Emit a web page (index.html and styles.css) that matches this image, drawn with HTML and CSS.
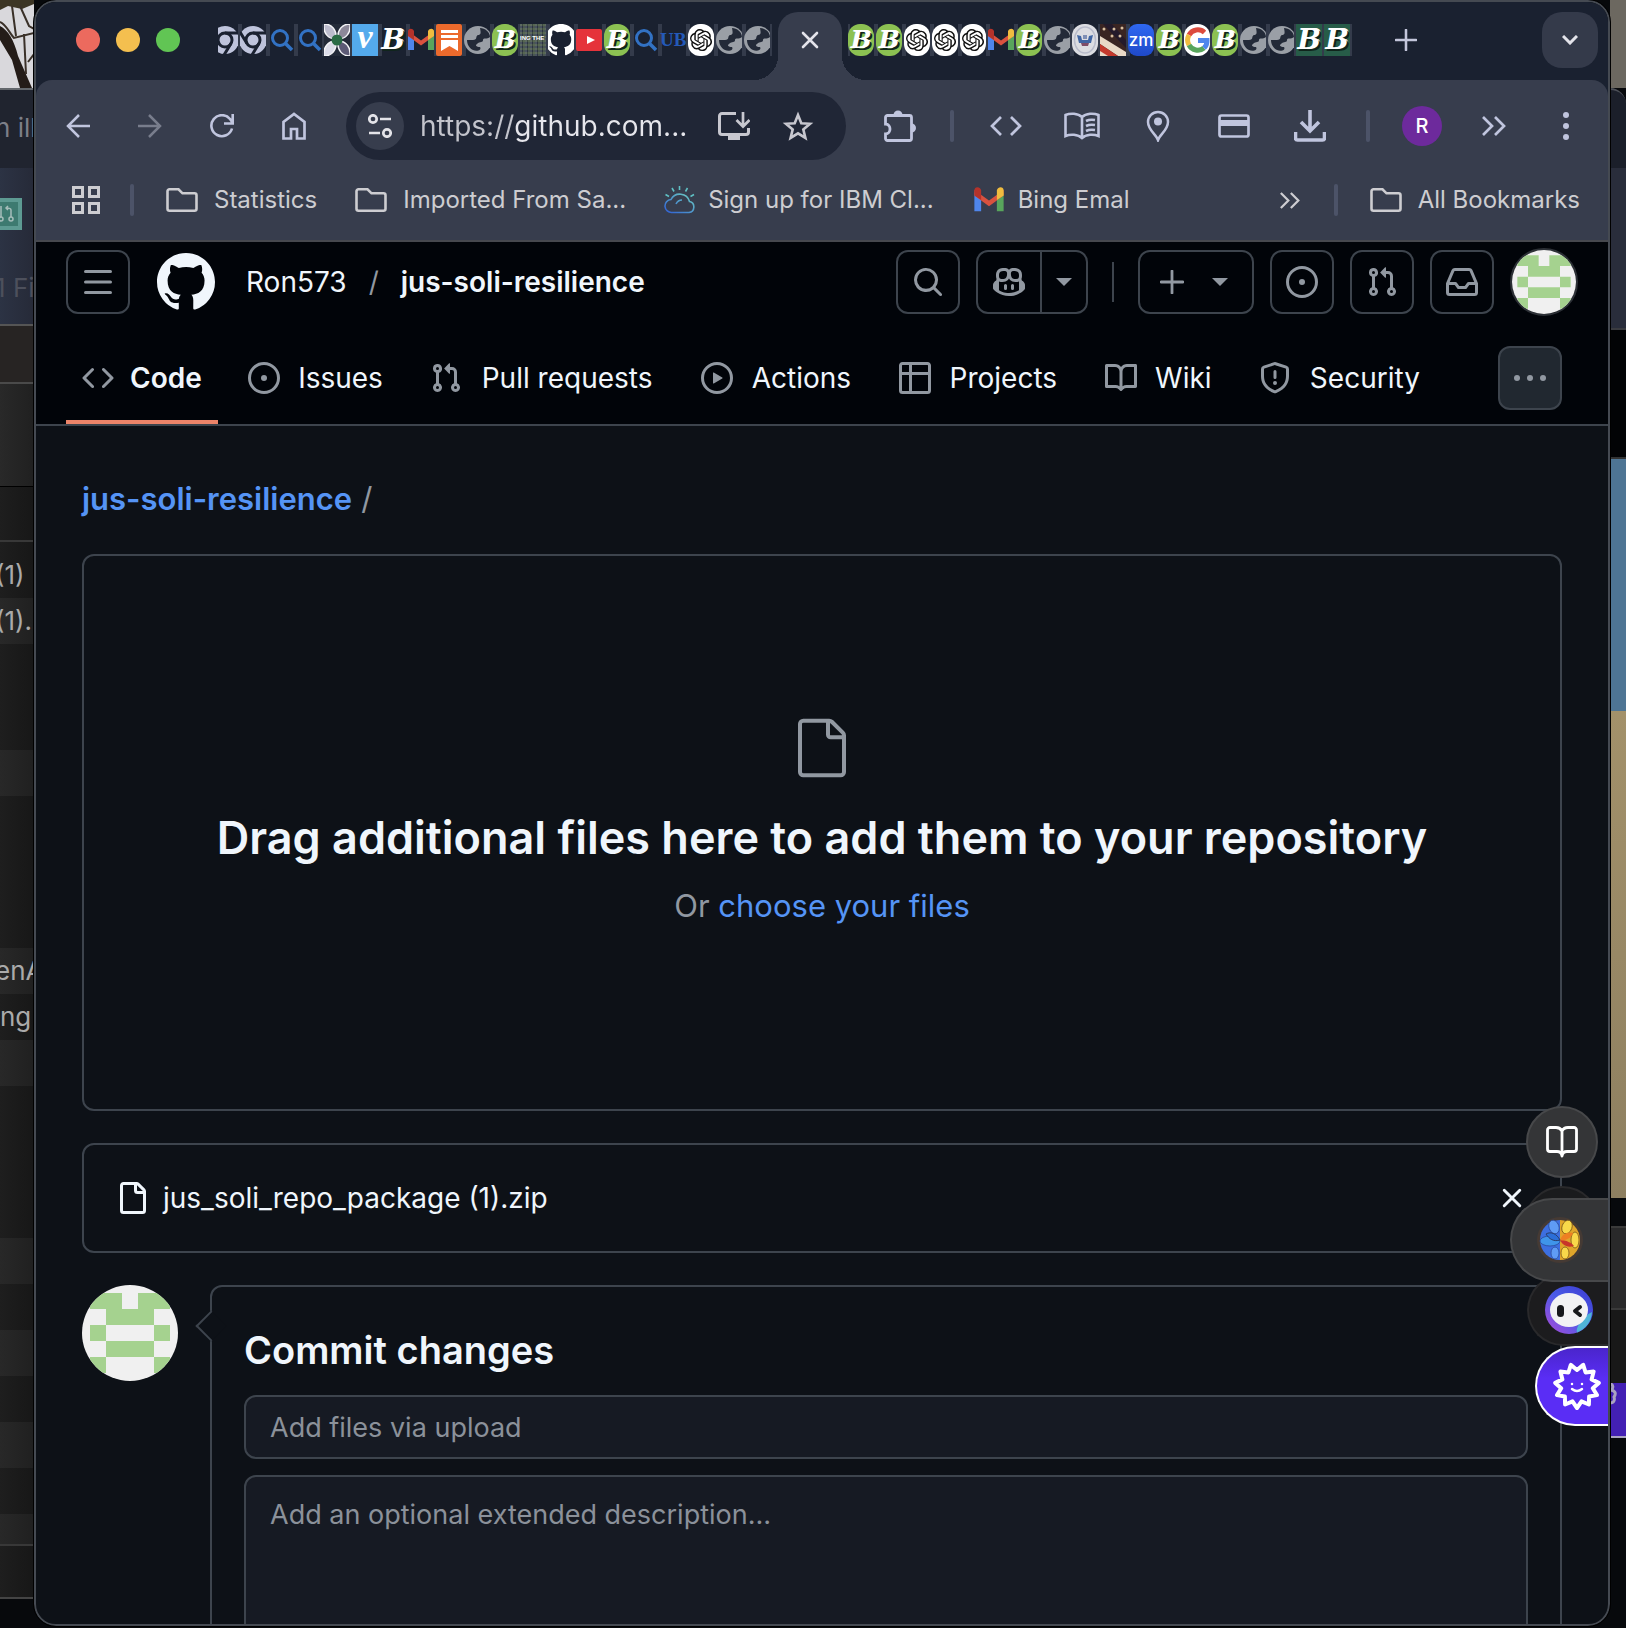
FILE: index.html
```html
<!DOCTYPE html>
<html lang="en">
<head>
<meta charset="utf-8">
<title>Upload files · Ron573/jus-soli-resilience</title>
<link rel="stylesheet" href="styles.css">
</head>
<body>
<svg class="defs" aria-hidden="true">
  <defs>
    <linearGradient id="g-cloud" x1="0" y1="1" x2="1" y2="0"><stop offset="0" stop-color="#2f5fd6"/><stop offset="1" stop-color="#6fd0c0"/></linearGradient>
    <linearGradient id="g-ring" x1="0" y1="1" x2="1" y2="0"><stop offset="0" stop-color="#b14ad8"/><stop offset=".5" stop-color="#4a5be8"/><stop offset="1" stop-color="#3d3bd0"/></linearGradient>
  </defs>
  <symbol id="f-chrome" viewBox="0 0 26 32"><circle cx="13" cy="16" r="14" fill="#bfc4dc"/><circle cx="13" cy="16" r="7" fill="none" stroke="#1a2130" stroke-width="3"/><path d="M13 9h14M7 19.500 0 8M19 19.500 12 31" stroke="#1a2130" stroke-width="3"/></symbol>
  <symbol id="f-search" viewBox="0 0 26 32"><circle cx="12" cy="14" r="7.500" fill="none" stroke="#3272c4" stroke-width="3"/><path d="m17 19 7 7" stroke="#3272c4" stroke-width="3.500"/></symbol>
  <symbol id="f-flower" viewBox="0 0 26 32"><path d="M0 0h26v32H0z" fill="#232a38"/><g stroke="#f2f2f5" stroke-width="1.500"><path d="M0 0c8 0 13 6 12 15C4 15-1 9 0 0z" fill="#bcbccd"/><path d="M26 0c-8 0-13 6-12 15 8 0 13-6 12-15z" fill="#8c8899"/><path d="M0 32c8 0 13-6 12-15-8 0-13 6-12 15z" fill="#dcdce8"/><path d="M26 32c-8 0-13-6-12-15 8 0 13 6 12 15z" fill="#5c5a75"/></g><circle cx="13" cy="16" r="5.500" fill="#2a6b45"/></symbol>
  <symbol id="f-gmail" viewBox="0 0 26 32"><path d="M0 9v17h6V13z" fill="#4f86ec"/><path d="M26 9v17h-6V13z" fill="#58a55c"/><path d="m0 7 13 9.500L26 7v5L13 21.500 0 12z" fill="#d9523f"/><path d="M0 12V7.500C0 4.500 3 4 5 5.500L6 7v9z" fill="#b5332b"/><path d="M26 12V7.500c0-3-3-3.500-5-2L20 7v9z" fill="#f0bc3f"/></symbol>
  <symbol id="f-substack" viewBox="0 0 26 32"><rect width="26" height="32" rx="2" fill="#ec6a2c"/><path d="M5 6h17v3H5zM5 11h17v3H5zM5 16h17v11l-8.500-5L5 27z" fill="#fff"/></symbol>
  <symbol id="f-globe" viewBox="0 0 26 32"><circle cx="14" cy="16" r="14" fill="#9a9fa6"/><path d="M16 4c5 0 10 4 10 9-3 3-7 0-7 3s-3 1-6 4c-2 1-1 3 3 3 2 3-3 5-7 3-4-2-6-6-6-10h6c5 0 2-4 5-5 3 0 3-2 2-7z" fill="#232a38"/></symbol>
  <symbol id="o-mark" viewBox="0 0 16 16"><path d="M8 0c4.420 0 8 3.580 8 8a8.013 8.013 0 0 1-5.450 7.590c-.4.080-.55-.170-.55-.380 0-.270.010-1.130.010-2.200 0-.750-.250-1.230-.540-1.480 1.780-.2 3.650-.880 3.650-3.950 0-.880-.310-1.590-.820-2.150.080-.2.360-1.020-.080-2.120 0 0-.670-.220-2.200.820-.640-.180-1.320-.270-2-.270-.680 0-1.360.090-2 .270-1.530-1.030-2.200-.820-2.200-.820-.440 1.100-.160 1.920-.080 2.120-.510.560-.820 1.280-.820 2.150 0 3.060 1.860 3.750 3.640 3.950-.230.2-.440.550-.510 1.070-.460.210-1.610.550-2.330-.660-.150-.240-.6-.830-1.230-.820-.670.010-.270.380.010.530.340.190.730.9.820 1.130.160.450.680 1.310 2.690.940 0 .670.010 1.300.010 1.490 0 .210-.150.450-.550.380A7.995 7.995 0 0 1 0 8c0-4.420 3.580-8 8-8Z"/></symbol>
  <symbol id="f-github" viewBox="0 0 26 32"><g fill="#fff"><use href="#o-mark" x="-3" width="32" height="32"/></g></symbol>
  <symbol id="f-youtube" viewBox="0 0 26 32"><rect y="5" width="26" height="22" rx="2" fill="#e5333b"/><path d="m11 12 8 4-8 4z" fill="#fff"/></symbol>
  <symbol id="f-gpt" viewBox="0 0 26 32"><rect width="26" height="32" rx="12" fill="#fff"/><path fill="#111" transform="translate(2 5) scale(.92)" d="M22.282 9.821a5.985 5.985 0 0 0-.516-4.910 6.046 6.046 0 0 0-6.510-2.900A6.065 6.065 0 0 0 4.981 4.182a5.985 5.985 0 0 0-3.998 2.900 6.046 6.046 0 0 0 .743 7.097 5.980 5.980 0 0 0 .511 4.911 6.051 6.051 0 0 0 6.515 2.900A5.985 5.985 0 0 0 13.260 24a6.056 6.056 0 0 0 5.772-4.206 5.989 5.989 0 0 0 3.998-2.900 6.056 6.056 0 0 0-.748-7.073zm-9.022 12.608a4.476 4.476 0 0 1-2.876-1.041l.142-.080 4.778-2.758a.795.795 0 0 0 .393-.681v-6.737l2.020 1.169a.071.071 0 0 1 .038.052v5.583a4.504 4.504 0 0 1-4.495 4.493zm-9.661-4.125a4.471 4.471 0 0 1-.535-3.014l.142.085 4.783 2.758a.771.771 0 0 0 .781 0l5.843-3.369v2.332a.080.080 0 0 1-.033.062L9.740 19.950a4.499 4.499 0 0 1-6.141-1.646zM2.341 7.896a4.485 4.485 0 0 1 2.366-1.973V11.600a.766.766 0 0 0 .388.677l5.814 3.354-2.020 1.169a.076.076 0 0 1-.071 0l-4.830-2.787A4.504 4.504 0 0 1 2.341 7.872zm16.596 3.856L13.104 8.364 15.119 7.200a.076.076 0 0 1 .071 0l4.830 2.791a4.494 4.494 0 0 1-.677 8.104v-5.677a.790.790 0 0 0-.406-.666zm2.011-3.023-.142-.085-4.774-2.782a.776.776 0 0 0-.785 0L9.409 9.230V6.897a.066.066 0 0 1 .028-.062l4.830-2.787a4.499 4.499 0 0 1 6.681 4.660zM8.307 12.863l-2.020-1.164a.080.080 0 0 1-.038-.057V6.074a4.499 4.499 0 0 1 7.376-3.454l-.142.081L8.704 5.459a.795.795 0 0 0-.393.681zm1.097-2.365 2.602-1.500 2.607 1.500v2.999l-2.597 1.500-2.607-1.500Z"/></symbol>
  <symbol id="f-seal" viewBox="0 0 26 32"><rect width="26" height="32" rx="12" fill="#dcdde2"/><ellipse cx="13" cy="16" rx="10.500" ry="13" fill="none" stroke="#b9bccb" stroke-width="1.500"/><path d="M5 11l4 1 1 4h6l1-4 4-1-2 8H7z" fill="#3f65a3"/><path d="M9 19h8l-1 3h-6z" fill="#7e4d68"/><path d="M11 11h4v4h-4z" fill="#7f8fb5"/></symbol>
  <symbol id="f-flag" viewBox="0 0 26 32"><path d="M0 0h26v32H0z" fill="#3a2522"/><path d="m0 12 26 16v4h-8L0 20z" fill="#e9d9c6"/><path d="m0 20 18 12H0z" fill="#c4392c"/><path d="m0 27 8 5H0z" fill="#e9d9c6"/><path d="m3 0 23 24v-8L12 0z" fill="#241a2a"/><g fill="#d9c0a0"><circle cx="4" cy="5" r="1.500"/><circle cx="14" cy="5" r="1.500"/><circle cx="20" cy="12" r="1.500"/><circle cx="12" cy="12" r="1.500"/><circle cx="22" cy="4" r="1.500"/></g></symbol>
  <symbol id="f-google" viewBox="0 0 26 32"><rect width="26" height="32" rx="12" fill="#fff"/><g fill="none" stroke-width="5"><path d="M20.500 8.500A10 10 0 0 0 5 11" stroke="#dc4b3e"/><path d="M5 11a10 10 0 0 0 0 10" stroke="#f0bc3f"/><path d="M5 21a10 10 0 0 0 15 3" stroke="#58a55c"/><path d="M20 24a10 10 0 0 0 3-7.500h-9" stroke="#4f86ec"/></g></symbol>

  <symbol id="i-back" viewBox="0 0 24 24"><path d="M24 12H2M13 1 2 12l11 11" fill="none" stroke="currentColor" stroke-width="2.500"/></symbol>
  <symbol id="i-fwd" viewBox="0 0 24 24"><path d="M0 12h22M11 1l11 11-11 11" fill="none" stroke="currentColor" stroke-width="2.500"/></symbol>
  <symbol id="i-reload" viewBox="0 0 24 24"><path d="M22 14.500A10.500 10.500 0 1 1 20 5l2.500 3.500M22.700 0v9.500H14" fill="none" stroke="currentColor" stroke-width="2.600"/></symbol>
  <symbol id="i-home" viewBox="0 0 24 28"><path d="M1.500 26.500V10L12 2l10.500 8v16.500H15V17H9v9.500z" fill="none" stroke="currentColor" stroke-width="2.700"/></symbol>
  <symbol id="i-tune" viewBox="0 0 24 24"><g fill="none" stroke="currentColor" stroke-width="2.700"><circle cx="5" cy="5" r="3.700"/><circle cx="19" cy="19" r="3.700"/><path d="M12 5h11M1 19h11"/></g></symbol>
  <symbol id="i-install" viewBox="0 0 32 28"><path d="M18 1.500H4A2.500 2.500 0 0 0 1.500 4v16A2.500 2.500 0 0 0 4 22.500h24a2.500 2.500 0 0 0 2.500-2.500v-4" fill="none" stroke="currentColor" stroke-width="3"/><path d="M10 22h12v6H10z" fill="currentColor"/><path d="M25 0v14M18.500 8l6.500 6.500L31.500 8" fill="none" stroke="currentColor" stroke-width="2.700"/></symbol>
  <symbol id="i-star" viewBox="0 0 32 30"><path d="m16 4 3.300 8.200 8.700.6-6.700 5.600 2.100 8.500L16 22.300l-7.400 4.600 2.100-8.500L4 12.800l8.700-.6z" fill="none" stroke="currentColor" stroke-width="2.600"/></symbol>
  <symbol id="i-puzzle" viewBox="0 0 32 32"><path d="M3.500 5.500h22a2 2 0 0 1 2 2v21a2 2 0 0 1-2 2h-22a2 2 0 0 1-2-2V24c6 0 6-10 0-10V7.500a2 2 0 0 1 2-2z" fill="none" stroke="currentColor" stroke-width="2.800"/><path d="M9.500 5a4.500 4.500 0 0 1 9 0zM27.500 13.500a4.500 4.500 0 0 1 0 9z" fill="currentColor"/></symbol>
  <symbol id="i-angle" viewBox="0 0 32 20"><path d="m11 1-9 9 9 9M21 1l9 9-9 9" fill="none" stroke="currentColor" stroke-width="2.700"/></symbol>
  <symbol id="i-read" viewBox="0 0 36 28"><path d="M18 5C14 1 6 1 1.500 3v21c4.500-2 12.500-2 16.500 2 4-4 12-4 16.500-2V3C30 1 22 1 18 5zv21M22 9c3-1.500 6-1.500 9-1M22 14c3-1.500 6-1.500 9-1M22 19c3-1.500 6-1.500 9-1" fill="none" stroke="currentColor" stroke-width="2.600"/></symbol>
  <symbol id="i-pin" viewBox="0 0 24 32"><path d="M12 30c-2-6-10-10-10-18a10 10 0 0 1 20 0c0 8-8 12-10 18z" fill="none" stroke="currentColor" stroke-width="2.500"/><circle cx="12" cy="11.500" r="4" fill="currentColor"/></symbol>
  <symbol id="i-card" viewBox="0 0 32 24"><rect x="1.500" y="1.500" width="29" height="21" rx="2" fill="none" stroke="currentColor" stroke-width="2.700"/><path d="M1 6h30v6H1z" fill="currentColor"/></symbol>
  <symbol id="i-down" viewBox="0 0 32 32"><path d="M16 0v21M7 12l9 9 9-9" fill="none" stroke="currentColor" stroke-width="3.600"/><path d="M1.500 22v6a2 2 0 0 0 2 2h25a2 2 0 0 0 2-2v-6" fill="none" stroke="currentColor" stroke-width="3.600"/></symbol>
  <symbol id="i-more" viewBox="0 0 24 20"><path d="m1 1 9 9-9 9M13 1l9 9-9 9" fill="none" stroke="currentColor" stroke-width="2.700"/></symbol>
  <symbol id="i-dots" viewBox="0 0 8 28"><g fill="currentColor"><circle cx="4" cy="3" r="3"/><circle cx="4" cy="14" r="3"/><circle cx="4" cy="25" r="3"/></g></symbol>
  <symbol id="i-apps" viewBox="0 0 28 28"><path d="M1.500 1.500h9v9h-9zM17.500 1.500h9v9h-9zM1.500 17.500h9v9h-9zM17.500 17.500h9v9h-9z" fill="none" stroke="currentColor" stroke-width="3"/></symbol>
  <symbol id="i-folder" viewBox="0 0 32 24"><path d="M3.500 1.300h9l4 4h12a2 2 0 0 1 2 2v13.400a2 2 0 0 1-2 2h-25a2 2 0 0 1-2-2V3.300a2 2 0 0 1 2-2z" fill="none" stroke="currentColor" stroke-width="2.600"/></symbol>
  <symbol id="i-cloud" viewBox="0 0 32 28"><g fill="none" stroke="url(#g-cloud)" stroke-width="1.600"><path d="M8 26.500a6.500 6.500 0 0 1-1-13 10 10 0 0 1 18.500 2 5.600 5.600 0 0 1-.5 11zM12 18c1-2 3-4 6-4"/></g><path d="M15.500 0v4M8 2l2 3.500M23.500 2l-2 3.500M1.500 8.500 5 10.500M30 8.500l-3.500 2" stroke="#5fc0c4" stroke-width="1.600"/></symbol>
  <symbol id="i-x" viewBox="0 0 18 18"><path d="m2 2 14 14M16 2 2 16" fill="none" stroke="currentColor" stroke-width="2.600" stroke-linecap="round"/></symbol>
  <symbol id="i-plus" viewBox="0 0 24 24"><path d="M12 1v22M1 12h22" fill="none" stroke="currentColor" stroke-width="2.800" stroke-linecap="round"/></symbol>
  <symbol id="i-chev" viewBox="0 0 16 10"><path d="m1 1 7 7 7-7" fill="none" stroke="currentColor" stroke-width="3"/></symbol>
  <symbol id="i-caret" viewBox="0 0 16 8"><path d="M0 0h16L8 8z" fill="currentColor"/></symbol>
  <symbol id="i-menu" viewBox="0 0 28 24"><path d="M1.500 1.500h25M1.500 12h25M1.500 22.500h25" stroke="currentColor" stroke-width="3" stroke-linecap="round"/></symbol>
  <symbol id="i-openbook" viewBox="0 0 32 32"><path d="M16 5c-1-2-3-3.500-6-3.500H4A2.500 2.500 0 0 0 1.500 4v19A2.500 2.500 0 0 0 4 25.500h7c3 0 4.500 1.500 5 4.500.5-3 2-4.500 5-4.500h7a2.500 2.500 0 0 0 2.500-2.500V4A2.500 2.500 0 0 0 28 1.500h-6c-3 0-5 1.500-6 3.500zv25" fill="none" stroke="currentColor" stroke-width="2.800" stroke-linejoin="round"/></symbol>

  <symbol id="o-code" viewBox="0 0 16 16"><path d="m11.280 3.220 4.250 4.250a.75.75 0 0 1 0 1.060l-4.250 4.250a.749.749 0 0 1-1.275-.326.749.749 0 0 1 .215-.734L13.940 8l-3.720-3.720a.749.749 0 0 1 .326-1.275.749.749 0 0 1 .734.215Zm-6.560 0a.751.751 0 0 1 1.042.018.751.751 0 0 1 .018 1.042L2.060 8l3.720 3.720a.749.749 0 0 1-.326 1.275.749.749 0 0 1-.734-.215L.47 8.530a.75.75 0 0 1 0-1.060Z"/></symbol>
  <symbol id="o-issue" viewBox="0 0 16 16"><path d="M8 9.500a1.500 1.500 0 1 0 0-3 1.500 1.500 0 0 0 0 3Z"/><path d="M8 0a8 8 0 1 1 0 16A8 8 0 0 1 8 0ZM1.500 8a6.500 6.500 0 1 0 13 0 6.500 6.500 0 0 0-13 0Z"/></symbol>
  <symbol id="o-pr" viewBox="0 0 16 16"><path d="M1.500 3.250a2.250 2.250 0 1 1 3 2.122v5.256a2.251 2.251 0 1 1-1.500 0V5.372A2.250 2.250 0 0 1 1.500 3.250Zm5.677-.177L9.573.677A.25.25 0 0 1 10 .854V2.500h1A2.500 2.500 0 0 1 13.500 5v5.628a2.251 2.251 0 1 1-1.500 0V5a1 1 0 0 0-1-1h-1v1.646a.25.25 0 0 1-.427.177L7.177 3.427a.25.25 0 0 1 0-.354ZM3.750 2.500a.75.75 0 1 0 0 1.500.75.75 0 0 0 0-1.500Zm0 9.500a.75.75 0 1 0 0 1.500.75.75 0 0 0 0-1.500Zm8.250.750a.75.75 0 1 0 1.500 0 .75.75 0 0 0-1.500 0Z"/></symbol>
  <symbol id="o-play" viewBox="0 0 16 16"><path d="M8 0a8 8 0 1 1 0 16A8 8 0 0 1 8 0ZM1.500 8a6.500 6.500 0 1 0 13 0 6.500 6.500 0 0 0-13 0Zm4.879-2.773 4.264 2.559a.25.25 0 0 1 0 .428l-4.264 2.559A.25.25 0 0 1 6 10.559V5.442a.25.25 0 0 1 .379-.215Z"/></symbol>
  <symbol id="o-table" viewBox="0 0 16 16"><path d="M0 1.750C0 .784.784 0 1.750 0h12.500C15.216 0 16 .784 16 1.750v12.500A1.750 1.750 0 0 1 14.250 16H1.750A1.750 1.750 0 0 1 0 14.250ZM6.500 6.500v8h7.750a.25.25 0 0 0 .25-.25V6.500Zm8-1.500V1.750a.25.25 0 0 0-.25-.25H6.500V5Zm-13 1.500v7.750c0 .138.112.25.25.25H5v-8ZM5 5V1.500H1.750a.25.25 0 0 0-.25.25V5Z"/></symbol>
  <symbol id="o-book" viewBox="0 0 16 16"><path d="M0 1.750A.75.75 0 0 1 .75 1h4.253c1.227 0 2.317.59 3 1.501A3.743 3.743 0 0 1 11.006 1h4.245a.75.75 0 0 1 .75.75v10.500a.75.75 0 0 1-.75.75h-4.507a2.250 2.250 0 0 0-1.591.659l-.622.621a.75.75 0 0 1-1.060 0l-.622-.621A2.250 2.250 0 0 0 5.258 13H.75a.75.75 0 0 1-.75-.75Zm7.251 10.324.004-5.073-.002-2.253A2.250 2.250 0 0 0 5.003 2.500H1.500v9h3.757a3.750 3.750 0 0 1 1.994.574ZM8.755 4.750l-.004 7.322a3.752 3.752 0 0 1 1.992-.572H14.500v-9h-3.495a2.250 2.250 0 0 0-2.250 2.250Z"/></symbol>
  <symbol id="o-shield" viewBox="0 0 16 16"><path d="M7.467.133a1.748 1.748 0 0 1 1.066 0l5.250 1.680A1.750 1.750 0 0 1 15 3.480V7c0 1.566-.32 3.182-1.303 4.682-.983 1.498-2.585 2.813-5.032 3.855a1.697 1.697 0 0 1-1.330 0c-2.447-1.042-4.049-2.357-5.032-3.855C1.320 10.182 1 8.566 1 7V3.480a1.750 1.750 0 0 1 1.217-1.667Zm.61 1.429a.25.25 0 0 0-.153 0l-5.250 1.680a.25.25 0 0 0-.174.238V7c0 1.358.275 2.666 1.057 3.860.784 1.194 2.121 2.340 4.366 3.297a.196.196 0 0 0 .154 0c2.245-.956 3.582-2.104 4.366-3.298C13.225 9.666 13.500 8.360 13.500 7V3.480a.251.251 0 0 0-.174-.237l-5.250-1.680ZM8.750 4.750v3a.75.75 0 0 1-1.500 0v-3a.75.75 0 0 1 1.500 0ZM9 10.500a1 1 0 1 1-2 0 1 1 0 0 1 2 0Z"/></symbol>
  <symbol id="o-search" viewBox="0 0 16 16"><path d="M10.680 11.740a6 6 0 0 1-7.922-8.982 6 6 0 0 1 8.982 7.922l3.040 3.040a.749.749 0 0 1-.326 1.275.749.749 0 0 1-.734-.215ZM11.500 7a4.499 4.499 0 1 0-8.997 0A4.499 4.499 0 0 0 11.500 7Z"/></symbol>
  <symbol id="o-inbox" viewBox="0 0 16 16"><path d="M2.800 2.060A1.750 1.750 0 0 1 4.410 1h7.180c.7 0 1.333.417 1.610 1.060l2.740 6.395c.04.093.06.194.06.295v4.500A1.750 1.750 0 0 1 14.250 15H1.750A1.750 1.750 0 0 1 0 13.250v-4.500c0-.101.020-.202.060-.295Zm1.610.440a.25.25 0 0 0-.23.152L1.887 8H4.750a.75.75 0 0 1 .6.3L6.625 10h2.750l1.275-1.700a.75.75 0 0 1 .6-.3h2.863L11.820 2.652a.25.25 0 0 0-.23-.152Zm10.090 7h-2.875l-1.275 1.700a.75.75 0 0 1-.6.3h-3.500a.75.75 0 0 1-.6-.3L4.375 9.500H1.500v3.750c0 .138.112.25.25.25h12.500a.25.25 0 0 0 .25-.25Z"/></symbol>
  <symbol id="o-copilot" viewBox="0 0 16 16"><path d="M7.998 15.035c-4.562 0-7.873-2.914-7.998-3.749V9.338c.085-.628.677-1.686 1.588-2.065.013-.07.024-.143.036-.218.029-.183.060-.384.126-.612-.201-.508-.254-1.084-.254-1.656 0-.870.128-1.769.693-2.484.579-.733 1.494-1.124 2.724-1.261 1.206-.134 2.262.034 2.944.765.050.053.096.108.139.165.044-.057.094-.112.143-.165.682-.731 1.738-.899 2.944-.765 1.230.137 2.145.528 2.724 1.261.566.715.693 1.614.693 2.484 0 .572-.053 1.148-.254 1.656.066.228.098.429.126.612.012.076.024.148.037.218.924.385 1.522 1.471 1.591 2.095v1.872c0 .766-3.351 3.795-8.002 3.795Zm0-1.485c2.280 0 4.584-1.110 5.002-1.433V7.862l-.023-.116c-.49.210-1.075.291-1.727.291-1.146 0-2.059-.327-2.710-.991A3.222 3.222 0 0 1 8 6.303a3.240 3.240 0 0 1-.544.743c-.65.664-1.563.991-2.710.991-.652 0-1.236-.081-1.727-.291l-.023.116v4.255c.419.323 2.722 1.433 5.002 1.433ZM6.762 2.830c-.193-.206-.637-.413-1.682-.297-1.019.113-1.479.404-1.713.7-.247.312-.369.789-.369 1.554 0 .793.129 1.171.308 1.371.162.181.519.379 1.442.379.853 0 1.339-.235 1.638-.54.315-.322.527-.827.617-1.553.117-.935-.037-1.395-.241-1.614Zm4.155-.297c-1.044-.116-1.488.091-1.681.297-.204.219-.359.679-.242 1.614.091.726.303 1.231.618 1.553.299.305.784.54 1.638.54.922 0 1.280-.198 1.442-.379.179-.2.308-.578.308-1.371 0-.765-.123-1.242-.37-1.554-.233-.296-.693-.587-1.713-.7Z"/><path d="M6.250 9.037a.75.75 0 0 1 .75.75v1.501a.75.75 0 0 1-1.500 0V9.787a.75.75 0 0 1 .75-.75Zm4.250.75v1.501a.75.75 0 0 1-1.500 0V9.787a.75.75 0 0 1 1.500 0Z"/></symbol>
  <symbol id="o-file" viewBox="0 0 16 16"><path d="M2 1.750C2 .784 2.784 0 3.750 0h6.586c.464 0 .909.184 1.237.513l2.914 2.914c.329.328.513.773.513 1.237v9.586A1.750 1.750 0 0 1 13.250 16h-9.500A1.750 1.750 0 0 1 2 14.250Zm1.750-.25a.25.25 0 0 0-.25.25v12.500c0 .138.112.25.25.25h9.500a.25.25 0 0 0 .25-.25V6h-2.750A1.750 1.750 0 0 1 9 4.250V1.500Zm6.750.062V4.250c0 .138.112.25.25.25h2.688l-.011-.013-2.914-2.914-.013-.011Z"/></symbol>
  <symbol id="o-file24" viewBox="0 0 24 24"><path d="M5 1.750h9.700a1.500 1.500 0 0 1 1 .4l4.100 4.100a1.500 1.500 0 0 1 .45 1V21A1.250 1.250 0 0 1 19 22.250H5A1.250 1.250 0 0 1 3.750 21V3A1.250 1.250 0 0 1 5 1.750zM14.250 2v5A1 1 0 0 0 15.250 8H20" fill="none" stroke="currentColor" stroke-width="1.500"/></symbol>
  <symbol id="o-kebab" viewBox="0 0 32 8"><circle cx="3" cy="4" r="3"/><circle cx="16" cy="4" r="3"/><circle cx="29" cy="4" r="3"/></symbol>
  <symbol id="avatar" viewBox="0 0 12 12"><path d="M0 0h12v12H0z" fill="#f0f0f0"/><path d="M1 1h4v2H1zM7 1h4v2H7zM3 3h6v2H3zM1 5h2v2H1zM9 5h2v2H9zM3 7h6v2H3zM1 9h2v2H1zM9 9h2v2H9z" fill="#a5d28f"/></symbol>
  <symbol id="w-brain" viewBox="0 0 48 48"><circle cx="24" cy="24" r="23" fill="#453a34"/><path d="M24 4a20 20 0 0 0 0 40z" fill="#3d6fe0"/><path d="M24 4a20 20 0 0 1 0 40z" fill="#e0a52a"/><g fill="#5f9cf5" stroke="#2a4a9a" stroke-width=".8"><ellipse cx="18" cy="11" rx="5" ry="7" transform="rotate(-20 18 11)"/><ellipse cx="14" cy="25" rx="10" ry="5" fill="#3f95ea"/><ellipse cx="19" cy="37" rx="4" ry="6"/></g><g fill="#f8d84a" stroke="#7a5518" stroke-width=".8"><ellipse cx="31" cy="11" rx="5" ry="7" transform="rotate(20 31 11)"/><ellipse cx="39" cy="24" rx="4" ry="8"/><ellipse cx="29" cy="37" rx="4" ry="6"/></g><path d="M24 24c6 0 12 3 14 6-6 2-11 0-14-6z" fill="#c8352a"/><path d="M24 24c2-6 8-9 13-7-2 5-7 8-13 7z" fill="#ee7f22"/><path d="M24 24c-3-6-9-9-14-6 3 5 8 8 14 6z" fill="#2b6fd8" stroke="#2a3d6a"/></symbol>
  <symbol id="w-wink" viewBox="0 0 48 48"><circle cx="24" cy="24" r="24" fill="url(#g-ring)"/><path d="M47 26a23 23 0 0 1-15 20.500c-2-4 5-16 15-20.500z" fill="#4fb4d8"/><ellipse cx="24" cy="24" rx="19" ry="17" fill="#f2f2f4"/><rect x="12" y="19" width="7" height="12" rx="3.500" fill="#17181c"/><path d="m35 21-5 4 5 4" fill="none" stroke="#17181c" stroke-width="4" stroke-linecap="round" stroke-linejoin="round"/></symbol>
  <symbol id="w-sun" viewBox="-24 -24 48 48"><path d="M0 22 4.500 15.400 11.900 18.500 12.100 10.500 20 9.100 15.800 2.300 21.800-3.100 14.600-6.600 16.600-14.400 8.600-13.500 6.200-21.100 0-16-6.200-21.100-8.600-13.500-16.600-14.400-14.600-6.600-21.800-3.100-15.800 2.300-20 9.100-12.100 10.500-11.900 18.500-4.500 15.400z" fill="none" stroke="#fff" stroke-width="4" stroke-linejoin="round"/><path d="M-5 3q5 4 10 0M-5-2h0M5-2h0" fill="none" stroke="#fff" stroke-width="2.500" stroke-linecap="round"/></symbol>
</svg>

<div class="desktop">
  <aside class="behind-left" aria-hidden="true">
    <svg class="photo" viewBox="0 0 34 88"><path d="M0 0h34v88H0z" fill="#d9d8dc"/><path d="M0 26c8 4 14 14 18 30l14 32H20L12 60 0 40z" fill="#241c18"/><path d="M0 0h34v4L22 9 8 6 0 10z" fill="#3c3524"/><path d="M0 22c6 2 10 12 14 16l20-5M12 6l4 30M20 6l9 20 5 3M24 34l2 40M28 62l6-8" fill="none" stroke="#3a3028" stroke-width="2"/></svg>
    <div class="bl bl-tab">n ill</div>
    <div class="bl bl-tool"><svg class="bl-icon" viewBox="0 0 22 32"><path d="M0 0h22v32H0z" fill="#5d9a92"/><path d="M0 4h18v24H0z" fill="#3d7a70"/><g fill="none" stroke="#a5bdba" stroke-width="1.500"><circle cx="1" cy="21" r="2"/><circle cx="11" cy="21" r="2"/><path d="M1 8v11M11 19v-7c0-2-2-2-5-2m2-2-2 2 2 2"/></g></svg><span class="bl-dim">1 Fi</span></div>
    <div class="bl bl-bar"></div>
    <div class="bl bl-head"></div>
    <div class="bl bl-sub"></div>
    <div class="bl bl-row pad">(1)</div>
    <div class="bl bl-row alt">(1).</div>
    <div class="bl bl-gap"></div>
    <div class="bl bl-row alt"></div>
    <div class="bl bl-wide"></div>
    <div class="bl bl-row alt">enA</div>
    <div class="bl bl-row flush">ng</div>
    <div class="bl bl-row alt"></div>
    <div class="bl bl-wide"></div>
    <div class="bl bl-row alt"></div>
    <div class="bl bl-row"></div>
    <div class="bl bl-row alt"></div>
    <div class="bl bl-row"></div>
    <div class="bl bl-row alt"></div>
    <div class="bl bl-row"></div>
    <div class="bl bl-end alt"></div>
    <div class="bl bl-foot"></div>
  </aside>

  <div class="window">
    <div class="tabstrip">
      <div class="lights"><button class="light red" aria-label="Close window"></button><button class="light amber" aria-label="Minimise"></button><button class="light green" aria-label="Zoom"></button></div>
      <div class="tabs">
        <button class="tab first" aria-label="Chrome"><svg><use href="#f-chrome"/></svg></button>
        <button class="tab" aria-label="Chrome"><svg><use href="#f-chrome"/></svg></button>
        <button class="tab" aria-label="Search"><svg><use href="#f-search"/></svg></button>
        <button class="tab" aria-label="Search"><svg><use href="#f-search"/></svg></button>
        <button class="tab" aria-label="Flower"><svg><use href="#f-flower"/></svg></button>
        <button class="tab"><span class="fav vimeo">v</span></button>
        <button class="tab"><span class="fav slab">B</span></button>
        <button class="tab" aria-label="Gmail"><svg><use href="#f-gmail"/></svg></button>
        <button class="tab" aria-label="Substack"><svg><use href="#f-substack"/></svg></button>
        <button class="tab" aria-label="Untitled"><svg><use href="#f-globe"/></svg></button>
        <button class="tab"><span class="fav slab lime">B</span></button>
        <button class="tab"><span class="fav noise">ING THE SYST</span></button>
        <button class="tab" aria-label="GitHub"><svg><use href="#f-github"/></svg></button>
        <button class="tab" aria-label="YouTube"><svg><use href="#f-youtube"/></svg></button>
        <button class="tab"><span class="fav slab lime">B</span></button>
        <button class="tab" aria-label="Search"><svg><use href="#f-search"/></svg></button>
        <button class="tab"><span class="fav ub">UB</span></button>
        <button class="tab" aria-label="ChatGPT"><svg><use href="#f-gpt"/></svg></button>
        <button class="tab" aria-label="Untitled"><svg><use href="#f-globe"/></svg></button>
        <button class="tab" aria-label="Untitled"><svg><use href="#f-globe"/></svg></button>
      </div>
      <div class="tab-active"><button class="plain" aria-label="Close tab"><svg class="s16"><use href="#i-x"/></svg></button></div>
      <div class="tabs">
        <button class="tab"><span class="fav slab lime">B</span></button>
        <button class="tab"><span class="fav slab lime">B</span></button>
        <button class="tab" aria-label="ChatGPT"><svg><use href="#f-gpt"/></svg></button>
        <button class="tab" aria-label="ChatGPT"><svg><use href="#f-gpt"/></svg></button>
        <button class="tab" aria-label="ChatGPT"><svg><use href="#f-gpt"/></svg></button>
        <button class="tab" aria-label="Gmail"><svg><use href="#f-gmail"/></svg></button>
        <button class="tab"><span class="fav slab lime">B</span></button>
        <button class="tab" aria-label="Untitled"><svg><use href="#f-globe"/></svg></button>
        <button class="tab" aria-label="Seal"><svg><use href="#f-seal"/></svg></button>
        <button class="tab" aria-label="Flag"><svg><use href="#f-flag"/></svg></button>
        <button class="tab"><span class="fav zm">zm</span></button>
        <button class="tab"><span class="fav slab lime">B</span></button>
        <button class="tab" aria-label="Google"><svg><use href="#f-google"/></svg></button>
        <button class="tab"><span class="fav slab lime">B</span></button>
        <button class="tab" aria-label="Untitled"><svg><use href="#f-globe"/></svg></button>
        <button class="tab" aria-label="Untitled"><svg><use href="#f-globe"/></svg></button>
        <button class="tab"><span class="fav slab forest">B</span></button>
        <button class="tab"><span class="fav slab forest">B</span></button>
      </div>
      <button class="plain new-tab" aria-label="New tab"><svg class="s20"><use href="#i-plus"/></svg></button>
      <button class="tab-search" aria-label="Search tabs"><svg width="16" height="10"><use href="#i-chev"/></svg></button>
    </div>

    <div class="chrome">
      <div class="navrow">
        <button class="nav" aria-label="Back"><svg width="24" height="24"><use href="#i-back"/></svg></button>
        <button class="nav off" aria-label="Forward"><svg width="24" height="24"><use href="#i-fwd"/></svg></button>
        <button class="nav" aria-label="Reload"><svg width="24" height="24"><use href="#i-reload"/></svg></button>
        <button class="nav" aria-label="Home"><svg width="24" height="28"><use href="#i-home"/></svg></button>
        <div class="address">
          <button class="site" aria-label="Site information"><svg width="24" height="24"><use href="#i-tune"/></svg></button>
          <input class="url" type="text" aria-label="Address" value="https://github.com...">
          <button class="plain" aria-label="Install"><svg width="32" height="28"><use href="#i-install"/></svg></button>
          <button class="plain" aria-label="Bookmark"><svg width="32" height="30"><use href="#i-star"/></svg></button>
        </div>
        <button class="nav ext" aria-label="Extensions"><svg width="32" height="32"><use href="#i-puzzle"/></svg></button>
        <span class="sep"></span>
        <div class="pinned">
          <button class="nav" aria-label="Developer tools"><svg width="32" height="20"><use href="#i-angle"/></svg></button>
          <button class="nav" aria-label="Reading mode"><svg width="36" height="28"><use href="#i-read"/></svg></button>
          <button class="nav" aria-label="Location"><svg width="24" height="32"><use href="#i-pin"/></svg></button>
          <button class="nav" aria-label="Payments"><svg width="32" height="24"><use href="#i-card"/></svg></button>
          <button class="nav" aria-label="Downloads"><svg width="32" height="32"><use href="#i-down"/></svg></button>
        </div>
        <span class="sep"></span>
        <button class="nav profile" aria-label="Profile R"><span class="initial">R</span></button>
        <button class="nav" aria-label="More tools"><svg width="24" height="20"><use href="#i-more"/></svg></button>
        <button class="nav" aria-label="Menu"><svg width="8" height="28"><use href="#i-dots"/></svg></button>
      </div>
      <div class="bookmarks">
        <button class="plain" aria-label="Apps"><svg width="28" height="28"><use href="#i-apps"/></svg></button>
        <span class="sep"></span>
        <a class="bm" href="#"><svg width="32" height="24"><use href="#i-folder"/></svg>Statistics</a>
        <a class="bm" href="#"><svg width="32" height="24"><use href="#i-folder"/></svg>Imported From Sa...</a>
        <a class="bm tight" href="#"><svg width="32" height="28"><use href="#i-cloud"/></svg>Sign up for IBM Cl...</a>
        <a class="bm mail" href="#"><svg width="30" height="36"><use href="#f-gmail"/></svg>Bing Emal</a>
        <button class="plain overflow" aria-label="More bookmarks"><svg width="20" height="17"><use href="#i-more"/></svg></button>
        <span class="sep last"></span>
        <a class="bm" href="#"><svg width="32" height="24"><use href="#i-folder"/></svg>All Bookmarks</a>
      </div>
    </div>

    <header class="gh">
      <div class="gh-top">
        <button class="box" aria-label="Open menu"><svg width="28" height="24"><use href="#i-menu"/></svg></button>
        <a class="logo" href="#" aria-label="Homepage"><svg width="58" height="58"><use href="#o-mark"/></svg></a>
        <nav class="context" aria-label="Repository path"><a href="#">Ron573</a><span class="slash">/</span><a class="strong" href="#">jus-soli-resilience</a></nav>
        <div class="actions">
          <button class="box" aria-label="Search"><svg class="s32"><use href="#o-search"/></svg></button>
          <div class="split"><button class="half" aria-label="Copilot"><svg class="s32"><use href="#o-copilot"/></svg></button><button class="half drop" aria-label="Copilot options"><svg width="16" height="8"><use href="#i-caret"/></svg></button></div>
          <span class="rule"></span>
          <button class="box wide" aria-label="Create new"><svg width="24" height="24"><use href="#i-plus"/></svg><svg width="16" height="8"><use href="#i-caret"/></svg></button>
          <button class="box" aria-label="Issues"><svg class="s32"><use href="#o-issue"/></svg></button>
          <button class="box" aria-label="Pull requests"><svg class="s32"><use href="#o-pr"/></svg></button>
          <button class="box" aria-label="Inbox"><svg class="s32"><use href="#o-inbox"/></svg></button>
          <button class="me" aria-label="Account"><svg class="avatar-sm"><use href="#avatar"/></svg></button>
        </div>
      </div>
      <nav class="gh-nav" aria-label="Repository">
        <a class="item current" href="#"><svg class="s32"><use href="#o-code"/></svg><span data-text="Code">Code</span></a>
        <a class="item" href="#"><svg class="s32"><use href="#o-issue"/></svg><span data-text="Issues">Issues</span></a>
        <a class="item" href="#"><svg class="s32"><use href="#o-pr"/></svg><span data-text="Pull requests">Pull requests</span></a>
        <a class="item" href="#"><svg class="s32"><use href="#o-play"/></svg><span data-text="Actions">Actions</span></a>
        <a class="item" href="#"><svg class="s32"><use href="#o-table"/></svg><span data-text="Projects">Projects</span></a>
        <a class="item" href="#"><svg class="s32"><use href="#o-book"/></svg><span data-text="Wiki">Wiki</span></a>
        <a class="item" href="#"><svg class="s32"><use href="#o-shield"/></svg><span data-text="Security">Security</span></a>
        <button class="box more" aria-label="More items"><svg width="32" height="8"><use href="#o-kebab"/></svg></button>
      </nav>
    </header>

    <main>
      <div class="crumb"><a href="#">jus-soli-resilience</a><span>/</span></div>
      <section class="drop-zone">
        <svg width="64" height="64"><use href="#o-file24"/></svg>
        <h1>Drag additional files here to add them to your repository</h1>
        <p>Or <a href="#">choose your files</a></p>
      </section>
      <div class="file"><svg class="s32"><use href="#o-file"/></svg><span>jus_soli_repo_package (1).zip</span><button class="plain" aria-label="Remove file"><svg width="20" height="20"><use href="#i-x"/></svg></button></div>
      <div class="commit">
        <svg class="avatar-lg"><use href="#avatar"/></svg>
        <form class="commit-box">
          <h2>Commit changes</h2>
          <input type="text" aria-label="Commit message" placeholder="Add files via upload">
          <textarea aria-label="Extended description" placeholder="Add an optional extended description…"></textarea>
        </form>
      </div>
    </main>

    <div class="widgets">
      <button class="w w-read" aria-label="Reader"><svg class="s32"><use href="#i-openbook"/></svg></button>
      <button class="w w-ai" aria-label="Assistant"><svg width="48" height="48"><use href="#w-brain"/></svg></button>
      <button class="w w-bot" aria-label="Bot"><svg width="48" height="48"><use href="#w-wink"/></svg></button>
      <button class="w w-fun" aria-label="Helper"><svg width="48" height="48"><use href="#w-sun"/></svg></button>
    </div>
  </div>

  <aside class="behind-right" aria-hidden="true">
    <div class="br stone"></div><div class="br navy"></div><div class="br slate"></div><div class="br black"></div><div class="br sky"></div><div class="br sand"></div><div class="br ink"></div><div class="br grey"></div><div class="br dim"></div>
    <div class="br violet"><svg width="8" height="24" viewBox="0 0 8 24"><path d="M0 1c3 0 4 4 1 6 5 1 5 4 3 7 1 3 0 6-4 6" fill="none" stroke="#a9a3c0" stroke-width="3"/></svg></div>
  </aside>
</div>
</body>
</html>
```
FILE: styles.css
```css
* { box-sizing: border-box; }
html, body { height: 100%; }
body {
  margin: 0;
  overflow: hidden;
  background: #07090c;
  color: #f0f6fc;
  font: 28px/40px Inter, "Liberation Sans", sans-serif;
  -webkit-font-smoothing: antialiased;
}
button { margin: 0; padding: 0; border: 0; background: none; color: inherit; font: inherit; display: inline-flex; align-items: center; justify-content: center; }
a { color: inherit; text-decoration: none; }
svg { display: block; flex: none; fill: currentColor; }
h1, h2, p { margin: 0; }
.defs { position: absolute; width: 0; height: 0; }
.s16 { width: 18px; height: 18px; }
.s20 { width: 22px; height: 22px; }
.s32 { width: 32px; height: 32px; }

.desktop { display: grid; grid-template-columns: 34px minmax(0, 1fr) 16px; height: 100vh; }

/* windows that peek out on both sides */
.behind-left, .behind-right { overflow: hidden; display: flex; flex-direction: column; }
.photo { width: 34px; height: 88px; }
.bl { flex: none; overflow: hidden; white-space: nowrap; background: linear-gradient(90deg, #1e1e1e, #171717); color: #aaa; font-size: 26px; text-indent: -5px; }
.bl-tab { height: 80px; padding-top: 18px; background: #20242f; border-top: 2px solid #63676c; color: #7d7f88; }
.bl-tool { height: 156px; padding-top: 30px; background: linear-gradient(90deg, #2c3344, #262a38); color: #4d505c; }
.bl-icon { width: 22px; height: 32px; margin-bottom: 38px; }
.bl-dim { display: block; }
.bl-bar { height: 58px; background: #272423; border-top: 2px solid #555; }
.bl-head { height: 105px; background: linear-gradient(90deg, #292929, #202020); border-top: 2px solid #4a4a4a; border-bottom: 1px solid #000; }
.bl-sub { height: 55px; border-bottom: 2px solid #383838; }
.bl-row { height: 46px; padding-top: 3px; }
.bl-row.pad { height: 56px; padding-top: 13px; }
.flush { text-indent: 0; }
.alt { background: linear-gradient(90deg, #282828, #202020); }
.bl-gap { height: 106px; }
.bl-wide { height: 152px; }
.bl-end { height: 30px; }
.bl-foot { height: 55px; border-top: 2px solid #383838; border-bottom: 2px solid #444; }
.br { flex: none; }
.stone { height: 88px; background: #6c6860; }
.navy { height: 80px; background: #1b1f2a; border-top: 2px solid #4d5058; border-radius: 0 16px 0 0; }
.slate { height: 162px; background: #292d3b; border-bottom: 2px solid #3a3b40; }
.black { height: 127px; background: #020305; }
.sky { height: 254px; background: #4e7594; border-top: 2px solid #333; }
.sand { height: 487px; background: linear-gradient(#a3916a, #8d7f60); }
.ink { height: 28px; background: #07090c; }
.grey { height: 84px; background: #29292a; border-top: 2px solid #3a3a3a; border-bottom: 2px solid #3a3a3a; }
.dim { height: 73px; background: #181818; }
.violet { height: 55px; background: #4320b4; border-bottom: 2px solid #a9a3c0; }

/* browser window */
.window {
  position: relative;
  height: calc(100vh - 2px);
  overflow: hidden;
  background: #0d1117;
  border: 2px solid #454a52;
  border-radius: 22px;
  outline: 1px solid #000;
  display: flex;
  flex-direction: column;
}
.tabstrip { flex: none; height: 94px; margin-bottom: -16px; padding: 0 10px 18px 40px; display: flex; align-items: center; background: #1a2130; }
.lights { display: flex; gap: 16px; margin-right: 32px; }
.light { width: 24px; height: 24px; border-radius: 50%; }
.red { background: #ec6a5e; }
.amber { background: #f4bf4f; }
.green { background: #61c554; }
.tabs { display: flex; }
.tab { width: 28px; height: 32px; justify-content: flex-start; background: linear-gradient(90deg, #343b4b 2px, transparent 2px 26px, #343b4b 26px); }
.tab svg { width: 26px; height: 32px; }
.tab.first { clip-path: inset(0 0 0 6px); }
.fav { display: block; width: 26px; height: 32px; line-height: 32px; text-align: center; white-space: nowrap; color: #fff; }
.slab { font: italic 700 28px/32px "DejaVu Serif", serif; text-shadow: 2px 2px 0 #10251c, 1px 0 0 #fff; }
.lime { background: #8cc152; border-radius: 12px; font-size: 25px; }
.forest { background: #275c48; }
.vimeo { background: #54aaec; font: italic 700 34px/26px "Liberation Serif", serif; }
.noise { overflow: hidden; background: repeating-linear-gradient(90deg, #ffffff18 0 2px, #00000030 2px 3px, #6a7a5566 3px 5px), repeating-linear-gradient(#4b5a50 0 2px, #36404f 2px 4px); font: 700 6px/28px "Liberation Sans", sans-serif; }
.ub { color: #2459b8; font: 700 19px/32px "Liberation Serif", serif; }
.zm { background: linear-gradient(#2f68f2, #1f49c8); border-radius: 9px; font-size: 17px; font-weight: 500; }
.tab-active {
  position: relative;
  align-self: flex-end;
  width: 64px;
  height: 68px;
  margin: 0 6px -2px;
  padding-bottom: 12px;
  display: flex;
  align-items: center;
  justify-content: center;
  background: #373d4d;
  border-radius: 20px 20px 0 0;
  color: #e3e3ea;
}
.tab-active::before, .tab-active::after { content: ""; position: absolute; bottom: 0; width: 24px; height: 24px; }
.tab-active::before { right: 100%; background: radial-gradient(circle at 0 0, transparent 24px, #373d4d 24px); }
.tab-active::after { left: 100%; background: radial-gradient(circle at 100% 0, transparent 24px, #373d4d 24px); }
.new-tab { margin-left: 43px; color: #c3c6db; }
.tab-search { width: 56px; height: 56px; margin-left: auto; border-radius: 20px; background: #343a4a; color: #e3e3ea; }

.chrome { flex: none; position: relative; background: #373d4d; border-radius: 16px 16px 0 0; border-bottom: 2px solid #46484e; }
.navrow { height: 80px; padding: 12px 6px 0; display: flex; align-items: center; color: #c0c5de; }
.nav { width: 72px; height: 48px; }
.off { color: #787d8c; }
.address { flex: 1; min-width: 0; height: 68px; margin-left: 16px; padding: 0 32px 0 10px; display: flex; align-items: center; gap: 32px; border-radius: 34px; background: #202636; color: #c7c7cf; }
.site { flex: none; width: 48px; height: 48px; border-radius: 50%; background: #373d4d; color: #e3e3e8; }
.url { flex: 1; min-width: 0; height: 48px; margin-left: -16px; padding: 0; border: 0; outline: 0; font: inherit; color: transparent; background: linear-gradient(90deg, #c3c4cc 94px, #e6e6ec 94px); background-clip: text; -webkit-background-clip: text; }
.ext { margin: 0 14px 0 18px; }
.sep { flex: none; width: 4px; height: 32px; border-radius: 2px; background: #4c5368; }
.pinned { display: flex; margin: 0 18px 0 14px; }
.pinned .nav { width: 76px; }
.profile { margin-left: 16px; }
.initial { width: 40px; height: 40px; border-radius: 50%; background: #6d2a9c; color: #fff; font-size: 20px; font-weight: 500; text-align: center; }
.bookmarks { height: 80px; padding: 0 28px 0 36px; display: flex; align-items: center; color: #cdcdd1; font-size: 24px; }
.bookmarks .sep { margin: 0 32px 0 30px; }
.bookmarks .last { margin-left: 34px; }
.bm { display: flex; align-items: center; gap: 16px; margin-right: 38px; white-space: nowrap; }
.tight { gap: 12px; margin-right: 40px; }
.mail { gap: 14px; }
.bm:last-child { margin-right: 0; }
.overflow { margin-left: auto; }

/* repository header */
.gh { flex: none; background: #010409; border-bottom: 2px solid #3d444d; }
.gh-top { height: 72px; padding: 8px 32px 0 30px; display: flex; align-items: center; }
.box { width: 64px; height: 64px; border: 2px solid #3d444d; border-radius: 12px; color: #9198a1; }
.logo { margin: 0 31px 0 27px; }
.context { display: flex; gap: 22px; white-space: nowrap; }
.strong { font-weight: 600; }
.slash { color: #9198a1; }
.actions { margin-left: auto; display: flex; align-items: center; gap: 16px; }
.split { display: flex; width: 112px; height: 64px; border: 2px solid #3d444d; border-radius: 12px; color: #9198a1; }
.half { flex: 1; }
.drop { flex: none; width: 46px; border-left: 2px solid #3d444d; }
.rule { width: 2px; height: 40px; margin: 0 8px; background: #3d444d; }
.wide { width: 116px; padding-right: 4px; gap: 28px; }
.me { width: 68px; height: 68px; margin-right: -2px; border: 2px solid #2c3036; border-radius: 50%; }
.avatar-sm { width: 64px; height: 64px; border-radius: 50%; }
.gh-nav { height: 110px; padding: 32px 46px 0 30px; display: flex; align-items: flex-start; gap: 14px; }
.item { height: 78px; padding: 0 16px 10px; display: flex; align-items: center; gap: 17px; white-space: nowrap; border-bottom: 4px solid transparent; }
.item svg { color: #9198a1; }
.item span { text-align: center; }
.item span::after { content: attr(data-text); display: block; height: 0; overflow: hidden; visibility: hidden; font-weight: 600; }
.current { gap: 16px; font-weight: 600; border-bottom-color: #ec8469; }
.more { margin-left: auto; background: #212830; }

main { padding: 51px 46px 0; }
.crumb { display: flex; gap: 9px; font-size: 31px; line-height: 44px; color: #9198a1; }
.crumb a { color: #5594f5; font-weight: 600; }
.drop-zone { margin-top: 33px; height: 557px; padding-top: 160px; display: flex; flex-direction: column; align-items: center; border: 2px solid #3d444d; border-radius: 12px; color: #9198a1; text-align: center; }
.drop-zone h1 { margin-top: 26px; color: #f0f6fc; font-size: 45px; line-height: 64px; font-weight: 600; }
.drop-zone p { margin-top: 12px; font-size: 31px; line-height: 48px; }
.drop-zone a { color: #5594f5; }
.file { margin-top: 32px; height: 110px; padding: 0 38px 0 32px; display: flex; align-items: center; gap: 15px; border: 2px solid #3d444d; border-radius: 12px; }
.file button { margin-left: auto; }
.commit { margin-top: 32px; display: flex; align-items: flex-start; gap: 32px; }
.avatar-lg { width: 96px; height: 96px; border-radius: 50%; }
.commit-box { position: relative; flex: 1; height: 500px; padding: 39px 32px 0; border: 2px solid #3d444d; border-radius: 12px; font-size: 27px; }
.commit-box::before { content: ""; position: absolute; left: -12px; top: 28px; width: 20px; height: 20px; transform: rotate(45deg); background: #0d1117; border: 2px solid #3d444d; border-width: 0 0 2px 2px; }
h2 { margin-bottom: 21px; font-size: 38px; line-height: 48px; font-weight: 600; }
.commit-box input, textarea { display: block; width: 100%; height: 64px; padding: 0 24px; border: 2px solid #3d444d; border-radius: 12px; background: #161a23; color: #f0f6fc; font: inherit; outline: 0; }
textarea { height: 300px; margin-top: 16px; padding: 18px 24px; resize: none; }
::placeholder { color: #8b919a; opacity: 1; }

/* extension buttons docked to the window edge */
.widgets { position: absolute; top: 1104px; right: 0; display: flex; flex-direction: column; align-items: flex-end; }
.w { position: relative; border: 2px solid #47484a; background: #343537; }
.w-read { width: 72px; height: 72px; margin: 0 10px 20px 0; border-radius: 50%; color: #fff; }
.w-ai { z-index: 1; width: 98px; height: 84px; border-right: 0; border-radius: 42px 0 0 42px; }
.w-bot { width: 81px; height: 72px; margin-top: -8px; border-color: #29292b; border-right: 0; border-radius: 36px 0 0 36px; background: #1c1c1e; }
.w-bot::before { content: ""; position: absolute; top: -90px; right: 8px; width: 72px; height: 72px; border: 2px solid #29292b; border-radius: 50%; background: #1a1b1d; }
.w-fun { z-index: 1; width: 73px; height: 80px; padding-left: 8px; border-color: #fff; border-right: 0; border-radius: 40px 0 0 40px; background: linear-gradient(#4a25cc, #5a2df5 40%); }
```
